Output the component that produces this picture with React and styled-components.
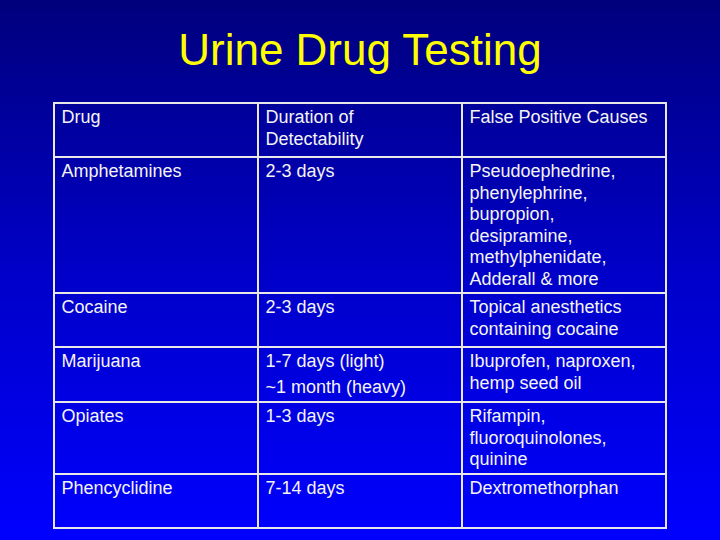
import styled, { createGlobalStyle } from "styled-components";

const GlobalStyle = createGlobalStyle`
  html, body {
    margin: 0;
    padding: 0;
  }
  body {
    font-family: "Liberation Sans", Arial, sans-serif;
  }
`;

const Slide = styled.div`
  width: 720px;
  height: 540px;
  overflow: hidden;
  box-sizing: border-box;
  background: linear-gradient(to bottom, #00007c 0%, #0000c8 50%, #0000ff 100%);
  display: flex;
  flex-direction: column;
  align-items: center;
`;

const Title = styled.h1`
  margin: 0;
  height: 102px;
  box-sizing: border-box;
  padding-top: 24px;
  font-family: "Liberation Sans", Arial, sans-serif;
  font-weight: normal;
  font-size: 44px;
  line-height: 52px;
  color: #ffff00;
`;

const Table = styled.table`
  border-collapse: collapse;
  width: 612px;
  table-layout: fixed;
  margin-left: -1px;
`;

const Col = styled.col`
  width: ${(p) => p.$w}px;
`;

const Row = styled.tr`
  height: ${(p) => p.$h}px;
`;

const Cell = styled.td`
  border: 2px solid #e8e8e8;
  vertical-align: top;
  padding: 3px 7px 0 7px;
  color: #f4f4f4;
  font-size: 18px;
  line-height: 21.6px;
  overflow: hidden;
`;

const Line = styled.div`
  & + & {
    margin-top: 4px;
  }
`;

const rows = [
  { h: 54, cells: ["Drug", ["Duration of", "Detectability"], "False Positive Causes"] },
  {
    h: 136,
    cells: [
      "Amphetamines",
      "2-3 days",
      ["Pseudoephedrine,", "phenylephrine,", "bupropion,", "desipramine,", "methylphenidate,", "Adderall & more"],
    ],
  },
  { h: 54, cells: ["Cocaine", "2-3 days", ["Topical anesthetics", "containing cocaine"]] },
  {
    h: 55,
    cells: ["Marijuana", { lines: ["1-7 days (light)", "~1 month (heavy)"] }, ["Ibuprofen, naproxen,", "hemp seed oil"]],
  },
  { h: 72, cells: ["Opiates", "1-3 days", ["Rifampin,", "fluoroquinolones,", "quinine"]] },
  { h: 54, cells: ["Phencyclidine", "7-14 days", "Dextromethorphan"] },
];

const renderCell = (c) => {
  if (Array.isArray(c)) {
    return c.map((t, i) => (
      <span key={i}>
        {t}
        {i < c.length - 1 && <br />}
      </span>
    ));
  }
  if (c && c.lines) {
    return c.lines.map((t, i) => <Line key={i}>{t}</Line>);
  }
  return c;
};

const App = () => {
  return (
    <>
      <GlobalStyle />
      <Slide>
        <Title>Urine Drug Testing</Title>
        <Table>
          <colgroup>
            <Col $w={204} />
            <Col $w={204} />
            <Col $w={204} />
          </colgroup>
          <tbody>
            {rows.map((r, i) => (
              <Row key={i} $h={r.h}>
                {r.cells.map((c, j) => (
                  <Cell key={j}>{renderCell(c)}</Cell>
                ))}
              </Row>
            ))}
          </tbody>
        </Table>
      </Slide>
    </>
  );
};

export default App;
